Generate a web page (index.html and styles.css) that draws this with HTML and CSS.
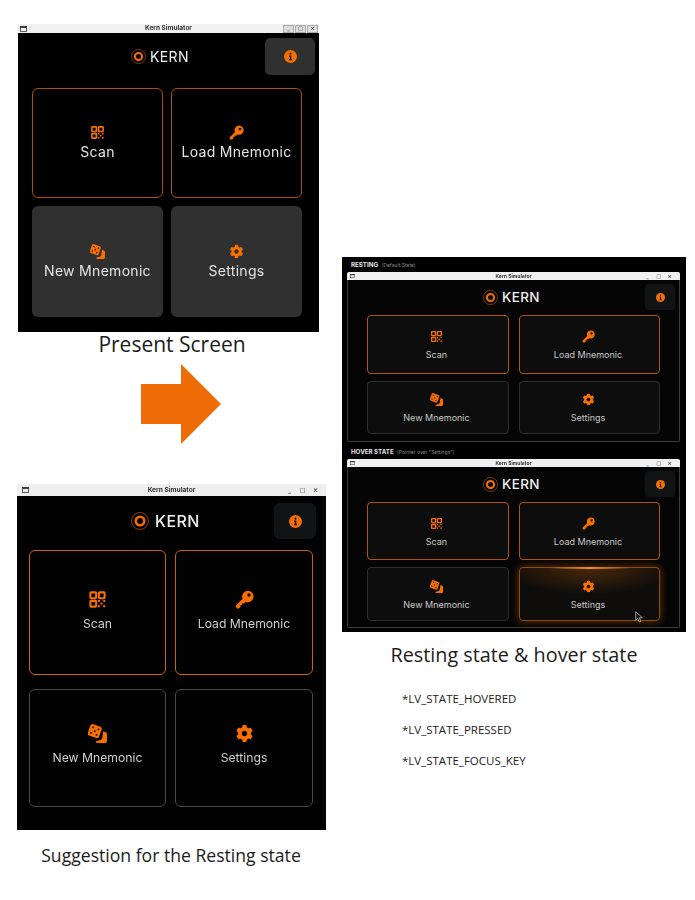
FILE: index.html
```html
<!DOCTYPE html>
<html lang="en">
<head>
<meta charset="utf-8">
<title>Kern Simulator states</title>
<link rel="stylesheet" href="styles.css">
</head>
<body>
<svg class="defs" aria-hidden="true">
  <symbol id="i-qr" viewBox="-2 -2 28 28">
    <g fill="none" stroke="currentColor" stroke-width="3">
      <rect x="1.500" y="1.500" width="8.500" height="8.500" rx="1"/>
      <rect x="14" y="1.500" width="8.500" height="8.500" rx="1"/>
      <rect x="1.500" y="14" width="8.500" height="8.500" rx="1"/>
    </g>
    <g fill="currentColor">
      <rect x="12.600" y="12.600" width="3" height="3"/><rect x="20.400" y="12.600" width="3" height="3"/>
      <rect x="16.500" y="16.500" width="3" height="3"/>
      <rect x="12.600" y="20.400" width="3" height="3"/><rect x="20.400" y="20.400" width="3" height="3"/>
    </g>
  </symbol>
  <symbol id="i-key" viewBox="0 0 24 24">
    <path fill="currentColor" fill-rule="evenodd" d="M16 .8a7.400 7.400 0 1 1-2.600 14.300l-2 2H9v2.200H6.800v2.100l-1.300 1.300a2.300 2.300 0 0 1-3.300 0l-.5-.5a2.300 2.300 0 0 1 0-3.200l7.900-7.900A7.400 7.400 0 0 1 16 .8zm1.700 3.400a2.100 2.100 0 1 0 0 4.200 2.100 2.100 0 0 0 0-4.200z"/>
  </symbol>
  <symbol id="i-dice" viewBox="0 0 24 24">
    <path fill="currentColor" d="M19.300 9.300l2.500.8c1.300.4 2.200 1.500 2.200 2.900v8c0 1.600-1.300 3-3 3h-8.500c-1.300 0-2.400-.8-2.800-2l5.800-1.700c2-.6 3-2.500 2.600-4.400z"/>
    <g transform="rotate(20 8.500 9)">
      <rect x="1" y="1.500" width="15" height="15" rx="2.800" fill="currentColor"/>
      <g fill="#090909">
        <circle cx="4.800" cy="5.300" r="1.200"/><circle cx="12.200" cy="5.300" r="1.200"/>
        <circle cx="8.500" cy="9" r="1.200"/>
        <circle cx="4.800" cy="12.700" r="1.200"/><circle cx="12.200" cy="12.700" r="1.200"/>
      </g>
    </g>
  </symbol>
  <symbol id="i-gear" viewBox="-24 -24 560 560">
    <path fill="currentColor" d="M487.400 315.700l-42.600-24.600c4.300-23.200 4.300-47 0-70.200l42.600-24.600c4.900-2.800 7.100-8.600 5.500-14-11.100-35.600-30-67.800-54.700-94.600-3.800-4.100-10-5.100-14.800-2.300L380.800 110c-17.900-15.400-38.500-27.300-60.800-35.100V25.800c0-5.600-3.900-10.500-9.400-11.700-36.700-8.200-74.300-7.800-109.200 0-5.500 1.200-9.400 6.100-9.400 11.700V75c-22.200 7.900-42.800 19.800-60.800 35.100L88.700 85.500c-4.900-2.800-11-1.900-14.800 2.300-24.700 26.700-43.600 58.900-54.700 94.600-1.700 5.400.6 11.200 5.500 14L67.300 221c-4.300 23.200-4.300 47 0 70.200l-42.600 24.600c-4.900 2.800-7.100 8.600-5.500 14 11.100 35.600 30 67.800 54.700 94.600 3.800 4.100 10 5.100 14.800 2.300l42.600-24.600c17.900 15.400 38.500 27.300 60.800 35.100v49.200c0 5.600 3.900 10.500 9.400 11.700 36.700 8.200 74.300 7.800 109.200 0 5.500-1.200 9.400-6.100 9.400-11.700v-49.200c22.200-7.900 42.800-19.800 60.800-35.100l42.600 24.600c4.900 2.800 11 1.900 14.800-2.300 24.700-26.700 43.600-58.900 54.700-94.600 1.500-5.500-.7-11.300-5.600-14.100zM256 336c-44.100 0-80-35.900-80-80s35.900-80 80-80 80 35.900 80 80-35.900 80-80 80z"/>
  </symbol>
  <symbol id="i-info" viewBox="0 0 24 24">
    <circle cx="12" cy="12" r="12" fill="currentColor"/>
    <g fill="#141414">
      <circle cx="12" cy="6.700" r="1.900"/>
      <path d="M9.300 10.100h4.200v6.500h1.300v2.400H9.300v-2.400h1.300v-4.100H9.300z"/>
    </g>
  </symbol>
  <symbol id="i-logo" viewBox="0 0 24 24">
    <circle cx="12" cy="12" r="11.300" fill="none" stroke="currentColor" stroke-width="1" opacity=".8"/>
    <circle cx="12" cy="12" r="5.700" fill="none" stroke="currentColor" stroke-width="3.400"/>
  </symbol>
  <symbol id="i-win" viewBox="0 0 12 10">
    <rect x=".6" y=".6" width="10.800" height="8.800" fill="none" stroke="currentColor" stroke-width="1.200"/>
    <rect x=".6" y=".6" width="10.800" height="2.400" fill="currentColor"/>
  </symbol>
</svg>

<!-- Present screen -->
<section class="win win-present">
  <header class="bar">
    <svg class="bar-ico"><use href="#i-win"/></svg>
    <span class="bar-title">Kern Simulator</span>
    <span class="ctrls"><span class="ctrl">_</span><span class="ctrl">□</span><span class="ctrl">×</span></span>
  </header>
  <div class="body">
    <div class="head">
      <svg class="logo"><use href="#i-logo"/></svg><span class="brand">KERN</span>
      <span class="info"><svg class="info-ico"><use href="#i-info"/></svg></span>
    </div>
    <div class="grid">
      <div class="tile hot"><svg class="ico"><use href="#i-qr"/></svg><span>Scan</span></div>
      <div class="tile hot"><svg class="ico"><use href="#i-key"/></svg><span>Load Mnemonic</span></div>
      <div class="tile"><svg class="ico"><use href="#i-dice"/></svg><span>New Mnemonic</span></div>
      <div class="tile"><svg class="ico"><use href="#i-gear"/></svg><span>Settings</span></div>
    </div>
  </div>
</section>
<p class="cap cap-present">Present Screen</p>

<svg class="arrow" viewBox="0 0 80 80"><path d="M0 20H40V0L80 40 40 80V60H0z"/></svg>

<!-- Suggestion -->
<section class="win win-suggest">
  <header class="bar">
    <svg class="bar-ico"><use href="#i-win"/></svg>
    <span class="bar-title">Kern Simulator</span>
    <span class="ctrls"><span class="ctrl">_</span><span class="ctrl">□</span><span class="ctrl">×</span></span>
  </header>
  <div class="body">
    <div class="head">
      <svg class="logo"><use href="#i-logo"/></svg><span class="brand">KERN</span>
      <span class="info"><svg class="info-ico"><use href="#i-info"/></svg></span>
    </div>
    <div class="grid">
      <div class="tile hot"><svg class="ico"><use href="#i-qr"/></svg><span>Scan</span></div>
      <div class="tile hot"><svg class="ico"><use href="#i-key"/></svg><span>Load Mnemonic</span></div>
      <div class="tile"><svg class="ico"><use href="#i-dice"/></svg><span>New Mnemonic</span></div>
      <div class="tile"><svg class="ico"><use href="#i-gear"/></svg><span>Settings</span></div>
    </div>
  </div>
</section>
<p class="cap cap-suggest">Suggestion for the Resting state</p>

<!-- States panel -->
<section class="panel">
  <p class="state"><b>RESTING</b> (Default State)</p>
  <div class="win win-state win-rest">
    <header class="bar">
      <svg class="bar-ico"><use href="#i-win"/></svg>
      <span class="bar-title">Kern Simulator</span>
      <span class="ctrls"><span class="ctrl">_</span><span class="ctrl">□</span><span class="ctrl">×</span></span>
    </header>
    <div class="body">
      <div class="head">
        <svg class="logo"><use href="#i-logo"/></svg><span class="brand">KERN</span>
        <span class="info"><svg class="info-ico"><use href="#i-info"/></svg></span>
      </div>
      <div class="grid">
        <div class="tile hot"><svg class="ico"><use href="#i-qr"/></svg><span>Scan</span></div>
        <div class="tile hot"><svg class="ico"><use href="#i-key"/></svg><span>Load Mnemonic</span></div>
        <div class="tile"><svg class="ico"><use href="#i-dice"/></svg><span>New Mnemonic</span></div>
        <div class="tile"><svg class="ico"><use href="#i-gear"/></svg><span>Settings</span></div>
      </div>
    </div>
  </div>
  <p class="state state-2"><b>HOVER STATE</b> (Pointer over "Settings")</p>
  <div class="win win-state win-hover">
    <header class="bar">
      <svg class="bar-ico"><use href="#i-win"/></svg>
      <span class="bar-title">Kern Simulator</span>
      <span class="ctrls"><span class="ctrl">_</span><span class="ctrl">□</span><span class="ctrl">×</span></span>
    </header>
    <div class="body">
      <div class="head">
        <svg class="logo"><use href="#i-logo"/></svg><span class="brand">KERN</span>
        <span class="info"><svg class="info-ico"><use href="#i-info"/></svg></span>
      </div>
      <div class="grid">
        <div class="tile hot"><svg class="ico"><use href="#i-qr"/></svg><span>Scan</span></div>
        <div class="tile hot"><svg class="ico"><use href="#i-key"/></svg><span>Load Mnemonic</span></div>
        <div class="tile"><svg class="ico"><use href="#i-dice"/></svg><span>New Mnemonic</span></div>
        <div class="tile glow"><svg class="ico"><use href="#i-gear"/></svg><span>Settings</span>
          <svg class="cursor" viewBox="0 0 12 18"><path d="M1 1v13l3.200-3 2.200 5.500 2.400-1-2.300-5.300H11z"/></svg>
        </div>
      </div>
    </div>
  </div>
</section>
<p class="cap cap-states">Resting state &amp; hover state</p>

<ul class="notes">
  <li>*LV_STATE_HOVERED</li>
  <li>*LV_STATE_PRESSED</li>
  <li>*LV_STATE_FOCUS_KEY</li>
</ul>
</body>
</html>
```
FILE: styles.css
```css
* { box-sizing: border-box; }
html, body { margin: 0; padding: 0; }
body { position: relative; width: 695px; height: 900px; overflow: hidden; background: #fff; font-family: "Inter", "Liberation Sans", sans-serif; color: #1a1a1a; }
.defs { position: absolute; width: 0; height: 0; }

/* free-canvas items of the collage */
.win-present { position: absolute; left: 18px; top: 24px; width: 301px; }
.win-suggest { position: absolute; left: 17px; top: 484px; width: 309px; }
.panel { position: absolute; left: 342px; top: 257px; width: 344px; height: 375px; background: #000; padding: 3px 6px 0 5px; }
.arrow { position: absolute; left: 141px; top: 364px; width: 80px; height: 80px; fill: #ee6c05; }
.cap { position: absolute; margin: 0; text-align: center; font-family: "Open Sans", sans-serif; color: #1c1c1c; white-space: nowrap; }
.cap-present { left: 72px; width: 200px; top: 330px; font-size: 21px; line-height: 28px; }
.cap-suggest { left: 21px; width: 300px; top: 844px; font-size: 17.600px; line-height: 22px; }
.cap-states { left: 364px; width: 300px; top: 642px; font-size: 19.800px; line-height: 26px; }
.notes { position: absolute; left: 402px; top: 690px; margin: 0; padding: 0; list-style: none; display: flex; flex-direction: column; gap: 13px; font-family: "Open Sans", sans-serif; font-size: 11.500px; line-height: 18px; color: #222; }

/* window */
.win { display: flex; flex-direction: column; filter: blur(.35px); }
.bar { display: flex; align-items: center; position: relative; background: #ececec; color: #222; }
.bar-ico { display: block; color: #222; flex: none; }
.bar-title { position: absolute; left: 0; right: 0; text-align: center; font-weight: 700; color: #333; }
.ctrls { display: flex; margin-left: auto; color: #333; }
.ctrl { display: flex; align-items: center; justify-content: center; font-weight: 700; font-family: "DejaVu Sans", sans-serif; }
.body { background: #020202; display: flex; flex-direction: column; }
.head { display: flex; align-items: center; color: #f0f0f0; }
.logo { display: block; flex: none; color: #ee6c05; }
.brand { font-weight: 500; letter-spacing: .4px; color: #f0f0f0; }
.info { margin-left: auto; display: flex; align-items: center; justify-content: center; background: #111314; }
.info-ico { display: block; color: #f66f00; }
.grid { display: grid; }
.tile { display: flex; flex-direction: column; align-items: center; justify-content: center; position: relative; border-style: solid; color: #cfcfcf; }
.ico { display: block; color: #f66f00; flex: none; }

/* present */
.win-present .bar { height: 9px; background: #f0f0f0; padding: 0 1px 0 2px; }
.win-present .bar-ico { width: 7px; height: 6px; }
.win-present .bar-title { font-size: 6.500px; line-height: 9px; }
.win-present .ctrl { width: 11px; height: 8px; margin-left: 1px; background: #ddd; border: 1px solid #aaa; font-size: 5px; line-height: 5px; }
.win-present .body { height: 299px; padding: 5px 4px 0 14px; background: #000; }
.win-present .head { height: 37px; padding-left: 99px; }
.win-present .logo { width: 15px; height: 15px; }
.win-present .brand { font-size: 14px; margin-left: 4px; font-weight: 400; }
.win-present .info { width: 50px; height: 37px; border-radius: 5px; background: #303030; }
.win-present .info-ico { width: 13px; height: 13px; }
.win-present .grid { margin-top: 13px; grid-template-columns: 131px 131px; grid-template-rows: 110px 111px; column-gap: 8px; row-gap: 8px; }
.win-present .tile { border-radius: 6px; border-width: 0; background: #303030; font-size: 14px; letter-spacing: .3px; line-height: 18px; gap: 3px; padding-top: 1px; color: #e4e4e4; }
.win-present .tile.hot { background: #000; border: 1.500px solid #b04e05; padding-top: 0; }
.win-present .ico { width: 15px; height: 15px; }

/* suggestion */
.win-suggest .bar { height: 12px; padding: 0 4px 0 5px; background: #eee; }
.win-suggest .bar-ico { width: 7px; height: 6px; }
.win-suggest .bar-title { font-size: 6.600px; line-height: 12px; }
.win-suggest .ctrl { width: 13px; font-size: 6px; line-height: 8px; }
.win-suggest .body { height: 334px; padding: 7px 10px 0 12px; }
.win-suggest .head { height: 36px; padding-left: 102px; }
.win-suggest .logo { width: 18px; height: 18px; }
.win-suggest .brand { font-size: 16px; margin-left: 6px; font-weight: 500; }
.win-suggest .info { width: 42px; height: 36px; border-radius: 6px; }
.win-suggest .info-ico { width: 13px; height: 13px; }
.win-suggest .grid { margin-top: 11px; grid-template-columns: 137px 138px; grid-template-rows: 125px 118px; column-gap: 9px; row-gap: 14px; }
.win-suggest .tile { border-radius: 6px; border: 1.500px solid #484848; font-size: 12.200px; line-height: 16px; gap: 7px; padding-bottom: 6px; }
.win-suggest .tile.hot { border-color: #d06006; padding-bottom: 4px; }
.win-suggest .ico { width: 19px; height: 19px; }

/* state panel */
.state { margin: 0 0 2px 4px; height: 10px; font-size: 5px; line-height: 10px; color: #8a8a8a; white-space: nowrap; }
.state b { font-size: 6.200px; color: #e8e8e8; margin-right: 2px; }
.state-2 { margin-top: 5px; }
.win-state .bar { height: 8px; padding: 0 5px 0 3px; border-radius: 2px 2px 0 0; background: #f0f0f0; }
.win-state .bar-ico { width: 5px; height: 4px; }
.win-state .bar-title { font-size: 5px; line-height: 8px; }
.win-state .ctrl { width: 11px; font-size: 5px; line-height: 6px; }
.win-state .body { padding: 4px 4px 0 19px; border: 1px solid #3c3c3c; border-top: 0; border-radius: 0 0 2px 2px; background: #050505; }
.win-state .head { height: 26px; padding-left: 116px; }
.win-state .logo { width: 15px; height: 15px; }
.win-state .brand { font-size: 13.500px; margin-left: 4px; font-weight: 500; }
.win-state .info { width: 30px; height: 26px; border-radius: 4px; }
.win-state .info-ico { width: 9px; height: 9px; }
.win-state .grid { margin-top: 5px; grid-template-columns: 142px 141px; column-gap: 10px; row-gap: 7px; }
.win-state .tile { border-radius: 4px; border: 1px solid #2e2e2e; background: #0d0d0d; font-size: 9px; line-height: 12px; gap: 6px; padding: 3px 3px 0 0; color: #c8c8c8; }
.win-rest .tile { padding-top: 1px; }
.win-state .tile.hot { border: 1.200px solid #b05406; }
.win-state .ico { width: 13px; height: 13px; }
.win-rest .body { height: 162px; }
.win-rest .grid { grid-template-rows: 59px 53px; }
.win-hover .body { height: 161px; }
.win-hover .grid { grid-template-rows: 58px 54px; }
.win-state .tile.glow { border-color: #8a4c10; background: radial-gradient(ellipse 60% 50% at 50% 0, #4a2809, rgba(20,14,8,0) 100%), #0f0d0b; box-shadow: 0 0 8px rgba(230,110,10,.45); }
.win-state .tile.glow::before { content: ""; position: absolute; left: 20%; right: 20%; top: -1px; height: 1.500px; background: linear-gradient(90deg, transparent, #f58a25, transparent); }
.cursor { position: absolute; left: 115px; top: 43px; width: 8px; height: 12px; fill: #111; stroke: #ddd; stroke-width: 1; }
```
